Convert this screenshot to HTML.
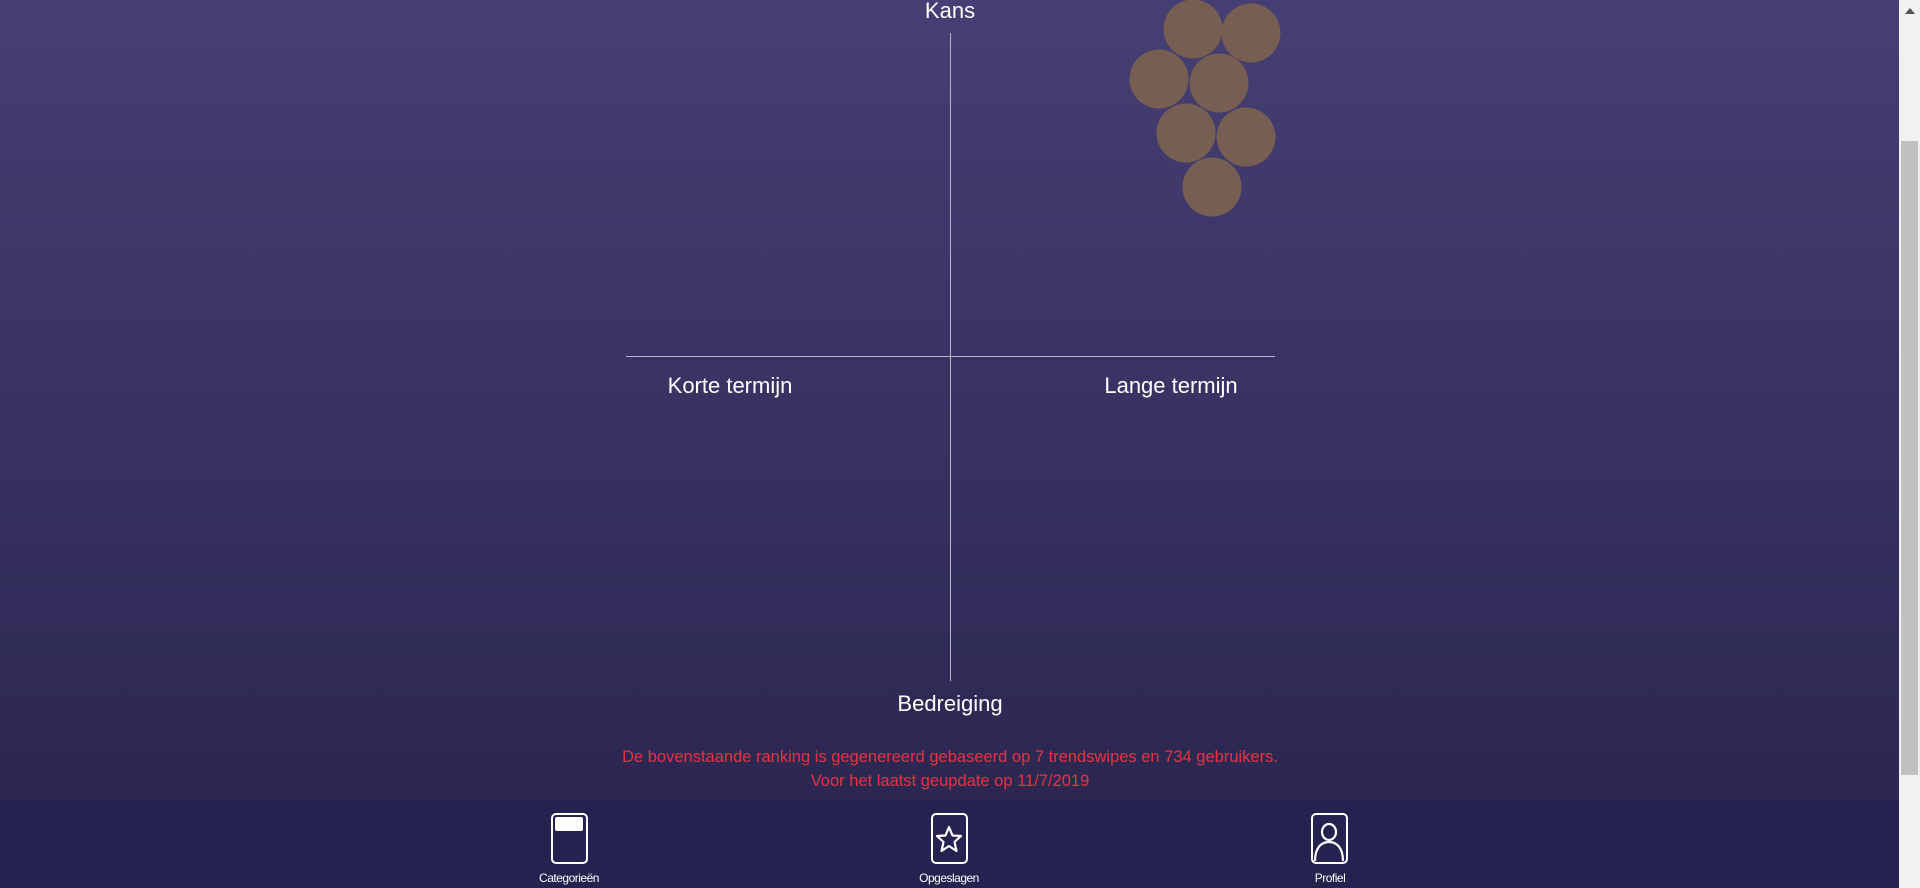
<!DOCTYPE html>
<html><head><meta charset="utf-8"><style>
*{margin:0;padding:0;box-sizing:border-box}
body{width:1920px;height:888px;overflow:hidden;position:relative;font-family:"Liberation Sans",sans-serif;background:linear-gradient(#463f73,#2b2751 801px);}
.t{position:absolute;color:#fff;font-size:22px;white-space:nowrap;transform:translate(-50%,-50%)}
.c{position:absolute;width:59px;height:59px;border-radius:50%;background:#765e52;transform:translate(-50%,-50%)}
.foot{position:absolute;left:0;top:801px;width:1899px;height:87px;background:#252250}
.red{position:absolute;left:950px;transform:translateX(-50%);color:#e8323f;font-size:16.5px;text-align:center;white-space:nowrap;line-height:24px;top:745px}
.ic{position:absolute;top:813px;width:37px;height:51px;border:2.5px solid #fff;border-radius:5px}
.lb{position:absolute;top:871px;color:#fff;font-size:12px;transform:translateX(-50%);letter-spacing:-0.5px}
</style></head><body>
<div style="position:absolute;left:950px;top:33px;width:1px;height:648px;background:#b8b5c8"></div>
<div style="position:absolute;left:626px;top:356px;width:649px;height:1px;background:#b8b5c8"></div>
<div class="t" style="left:950px;top:11px">Kans</div>
<div class="t" style="left:730px;top:386px">Korte termijn</div>
<div class="t" style="left:1171px;top:386px">Lange termijn</div>
<div class="t" style="left:950px;top:704px">Bedreiging</div>
<div class="c" style="left:1193px;top:29px"></div>
<div class="c" style="left:1251px;top:33px"></div>
<div class="c" style="left:1159px;top:79px"></div>
<div class="c" style="left:1219px;top:83px"></div>
<div class="c" style="left:1186px;top:133px"></div>
<div class="c" style="left:1246px;top:137px"></div>
<div class="c" style="left:1212px;top:187px"></div>
<div class="red">De bovenstaande ranking is gegenereerd gebaseerd op 7 trendswipes en 734 gebruikers.<br>Voor het laatst geupdate op 11/7/2019</div>
<div class="foot"></div>
<div class="ic" style="left:551px"><div style="position:absolute;left:2px;top:2px;width:28px;height:14px;background:#fff;border-radius:2px"></div></div>
<div class="lb" style="left:569px">Categorieën</div>
<div class="ic" style="left:931px"><svg width="32" height="46" viewBox="0 0 32 46" style="position:absolute;left:0;top:0"><path d="M16 12 L19.5 20.5 L28 21 L21.5 27 L23.5 36 L16 31 L8.5 36 L10.5 27 L4 21 L12.5 20.5 Z" fill="none" stroke="#fff" stroke-width="2.2" stroke-linejoin="round"/></svg></div>
<div class="lb" style="left:949px">Opgeslagen</div>
<div class="ic" style="left:1311px"><svg width="32" height="46" viewBox="0 0 32 46" style="position:absolute;left:0;top:0"><ellipse cx="16" cy="17" rx="7" ry="8" fill="none" stroke="#fff" stroke-width="2.2"/><path d="M2 46 C2 32 9 27 16 27 C23 27 30 32 30 46" fill="none" stroke="#fff" stroke-width="2.2"/></svg></div>
<div class="lb" style="left:1330px">Profiel</div>
<div style="position:absolute;left:1899px;top:0;width:21px;height:888px;background:#f1f1f1"></div>
<div style="position:absolute;left:1901px;top:141px;width:17px;height:634px;background:#c1c1c1"></div>
<div style="position:absolute;left:1905px;top:8px;width:0;height:0;border-left:5px solid transparent;border-right:5px solid transparent;border-bottom:6px solid #505050"></div>
</body></html>
